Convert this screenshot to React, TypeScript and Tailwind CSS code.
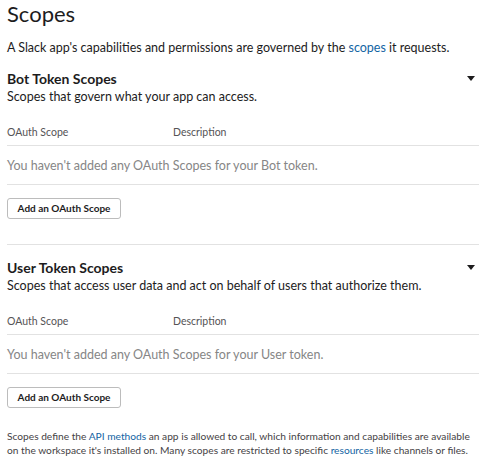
export default function App() {
  return (
    <div className="w-[472px] ml-[7px] font-['Lato','Open_Sans',sans-serif] text-[#1d1c1d] bg-white">
      <h1 className="text-[22px] leading-[28px]">Scopes</h1>

      <p className="mt-[11px] text-[12.5px] leading-[18px]">
        A Slack app's capabilities and permissions are governed by the{" "}
        <a className="text-[#1264a3]">scopes</a> it requests.
      </p>

      <ScopeSection
        title="Bot Token Scopes"
        subtitle="Scopes that govern what your app can access."
        empty="You haven't added any OAuth Scopes for your Bot token."
        className="mt-[13px]"
      />

      <div className="mt-[25px] border-b border-[#e2e2e2]" />

      <ScopeSection
        title="User Token Scopes"
        subtitle="Scopes that access user data and act on behalf of users that authorize them."
        empty="You haven't added any OAuth Scopes for your User token."
        className="mt-[14px]"
      />

      {/* Footer note */}
      <p className="mt-[21px] text-[10.2px] leading-[14px] text-[#454245] whitespace-nowrap">
        Scopes define the <a className="text-[#1264a3]">API methods</a> an app is
        allowed to call, which information and capabilities are available
        <br />
        on the workspace it's installed on. Many scopes are restricted to specific{" "}
        <a className="text-[#1264a3]">resources</a> like channels or files.
      </p>
    </div>
  );
}

function ScopeSection({
  title,
  subtitle,
  empty,
  className,
}: {
  title: string;
  subtitle: string;
  empty: string;
  className?: string;
}) {
  return (
    <div className={className}>
      <div className="flex items-center justify-between">
        <h2 className="text-[14px] leading-[18px] font-bold">{title}</h2>
        <svg width="8" height="5" viewBox="0 0 8 5" className="mr-[4px] -mt-[2px]">
          <path d="M0 0h8L4 5z" fill="#1d1c1d" />
        </svg>
      </div>
      <p className="text-[12.5px] leading-[18px]">{subtitle}</p>

      {/* Table */}
      <div className="flex pt-[19px] pb-[6px] text-[10.5px] leading-[14px] text-[#555355] border-b border-[#e2e2e2]">
        <div className="w-[166px]">OAuth Scope</div>
        <div>Description</div>
      </div>
      <div className="pt-[11px] pb-[10px] text-[12.5px] leading-[17px] text-[#868686] border-b border-[#e2e2e2]">
        {empty}
      </div>

      <button className="mt-[13px] w-[114px] h-[21px] rounded-[3px] border border-[#bcbcbc] bg-white text-[10px] font-bold text-[#1d1c1d]">
        Add an OAuth Scope
      </button>
    </div>
  );
}
